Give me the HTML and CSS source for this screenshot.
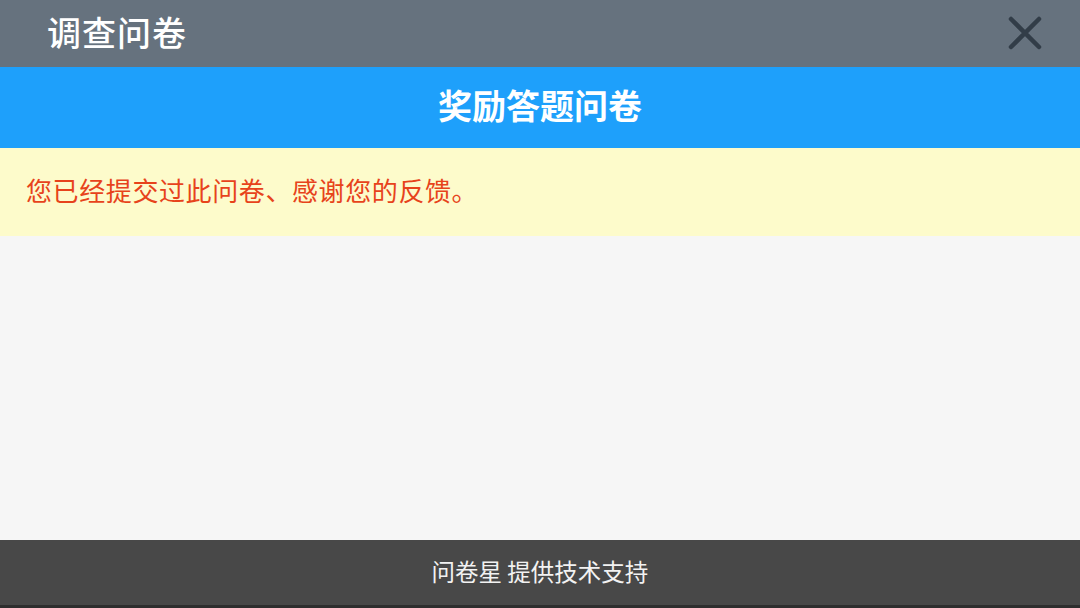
FILE: index.html
```html
<!DOCTYPE html>
<html lang="zh-CN">
<head>
<meta charset="utf-8">
<title>调查问卷</title>
<link rel="stylesheet" href="styles.css">
</head>
<body>
<div class="page">
  <header class="topbar">
    <div class="topbar-title">调查问卷</div>
    <button class="close" aria-label="关闭">
      <svg width="34" height="34" viewBox="0 0 34 34"><path d="M3 3 L31 31 M31 3 L3 31" stroke="#323d48" stroke-width="4.5" stroke-linecap="round" fill="none"/></svg>
    </button>
  </header>
  <div class="banner">奖励答题问卷</div>
  <div class="notice">您已经提交过此问卷、感谢您的反馈。</div>
  <main class="content"></main>
  <footer class="footer">问卷星 提供技术支持</footer>
  <div class="edge"></div>
</div>
</body>
</html>
```
FILE: styles.css
```css
* { box-sizing: border-box; }
html, body { margin: 0; padding: 0; }
body {
  width: 1080px;
  height: 608px;
  overflow: hidden;
  font-family: "Noto Sans CJK SC", "Noto Sans", sans-serif;
}
.page {
  display: flex;
  flex-direction: column;
  height: 608px;
}
.topbar {
  height: 67px;
  background: #66727e;
  display: flex;
  align-items: center;
  justify-content: space-between;
  padding: 0 38px 0 48px;
}
.topbar-title {
  color: #ffffff;
  font-size: 34px;
  font-weight: 500;
  letter-spacing: 1px;
  line-height: 1;
  margin-bottom: 3px;
  margin-left: -1px;
}
.close {
  border: 0;
  background: transparent;
  padding: 0;
  display: flex;
  width: 34px;
  height: 34px;
  margin-top: -2px;
}
.banner {
  height: 81px;
  background: #1ea0fb;
  color: #ffffff;
  font-size: 34px;
  font-weight: 700;
  display: flex;
  align-items: center;
  justify-content: center;
  padding-bottom: 6px;
}
.notice {
  height: 88px;
  background: #fdfbcb;
  color: #e7431b;
  font-size: 26px;
  display: flex;
  align-items: center;
  padding-left: 26px;
  padding-bottom: 6px;
  letter-spacing: 0.6px;
}
.content {
  flex: 1;
  background: #f6f6f6;
}
.footer {
  height: 65px;
  background: #484848;
  color: #f2f2f2;
  font-size: 23.5px;
  display: flex;
  align-items: center;
  justify-content: center;
  padding-bottom: 4px;
}
.edge {
  height: 3px;
  background: #2e2e2e;
}
```
